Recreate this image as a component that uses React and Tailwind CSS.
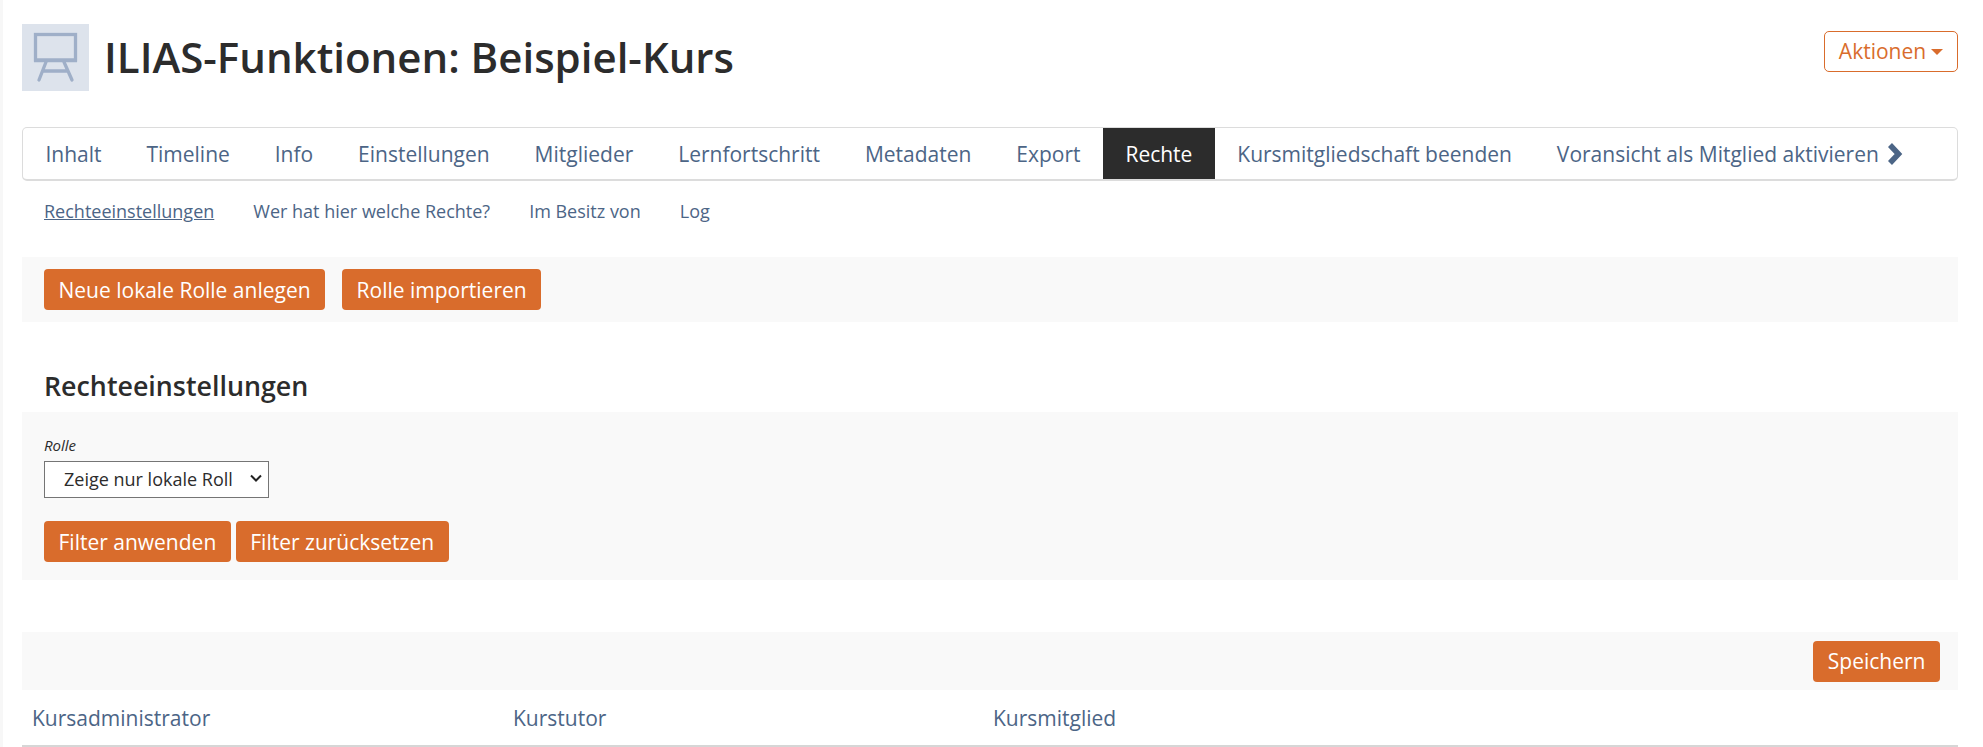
import React from "react";

const tabs = ["Inhalt","Timeline","Info","Einstellungen","Mitglieder","Lernfortschritt","Metadaten","Export","Rechte","Kursmitgliedschaft beenden","Voransicht als Mitglied aktivieren"];
const sub = ["Rechteeinstellungen","Wer hat hier welche Rechte?","Im Besitz von","Log"];

function Btn({ children }) {
  return (
    <button className="h-[41px] px-[14.5px] pt-[1px] rounded-[4px] bg-[#d96c2c] text-white text-[21px] leading-none whitespace-nowrap">
      {children}
    </button>
  );
}

export default function App() {
  return (
    <div className="w-[1983px] h-[747px] overflow-hidden bg-white border-l-[3px] border-[#f7f7f7] pl-[19px] pr-[25px] text-[#2c2c2c] font-['Open_Sans',sans-serif]">
      <header className="flex items-start justify-between pt-[24px] h-[127px]">
        <div className="flex items-start">
          <div className="w-[67px] h-[67px] bg-[#dde3ec] flex items-center justify-center">
            <svg width="67" height="67" viewBox="0 0 67 67" fill="none" stroke="#9fafc8" strokeWidth="3.3" strokeLinecap="round">
              <rect x="13.5" y="10.5" width="40" height="25.5" />
              <path d="M12 36.5h43" strokeWidth="3.6" strokeLinecap="butt" />
              <path d="M24 38 17 56M42 38l8 18M21 47h25" />
            </svg>
          </div>
          <h1 className="ml-[15px] mt-[5px] text-[42px] leading-[56px] font-semibold whitespace-nowrap">ILIAS-Funktionen: Beispiel-Kurs</h1>
        </div>
        <button className="mt-[7px] h-[41px] w-[134px] rounded-[5px] border border-[#d96c2c] text-[#d96c2c] text-[21px] leading-none flex items-center justify-center gap-[5px] bg-white">
          Aktionen
          <span className="w-0 h-0 mt-[1px] border-x-[6px] border-x-transparent border-t-[6px] border-t-[#d96c2c]" />
        </button>
      </header>

      <nav className="h-[54px] border border-[#dcdcdc] rounded-[5px] flex items-stretch border-b-2">
        {tabs.map((t) => (
          <a key={t} className={"px-[22.46px] pt-[3px] flex items-center text-[21px] whitespace-nowrap " + (t === "Rechte" ? "bg-[#2c2c2c] text-white" : "text-[#4c6586]")}>
            {t}
          </a>
        ))}
        <svg className="self-center -ml-[15px] mt-[1px]" width="19" height="24" viewBox="0 0 19 24" fill="none" stroke="#4c6586" strokeWidth="5.5">
          <path d="M4 3 12.5 12 4 21" />
        </svg>
      </nav>

      <div className="flex items-center h-[60px] pl-[22px] gap-[39px] text-[18px] text-[#4c6586]">
        {sub.map((s, i) => (
          <a key={s} className={"whitespace-nowrap " + (i === 0 ? "underline" : "")}>{s}</a>
        ))}
      </div>

      <div className="mt-[16px] h-[65px] bg-[#f9f9f9] pl-[22px] flex items-center gap-[17px]">
        <Btn>Neue lokale Rolle anlegen</Btn>
        <Btn>Rolle importieren</Btn>
      </div>

      <h2 className="pl-[22px] h-[90px] flex items-end pb-[8px] text-[26.8px] leading-[36px] font-semibold">Rechteeinstellungen</h2>

      <div className="h-[168px] bg-[#f9f9f9] pl-[22px] pt-[23px]">
        <div className="text-[15px] italic leading-[20px]">Rolle</div>
        <div className="relative mt-[6px] w-[225px] h-[37px]">
          <select className="appearance-none block w-full h-full border border-[#757575] bg-white pl-[19px] pr-[36px] text-[18px] text-[#2c2c2c]">
            <option>Zeige nur lokale Rollen</option>
          </select>
          <svg className="absolute left-[206px] top-[13px]" width="12" height="9" viewBox="0 0 12 9" fill="none" stroke="#222" strokeWidth="2">
            <path d="M1 1.5 6 6.5 11 1.5" />
          </svg>
        </div>
        <div className="mt-[23px] flex gap-[5px]">
          <Btn>Filter anwenden</Btn>
          <Btn>Filter zurücksetzen</Btn>
        </div>
      </div>

      <div className="mt-[52px] h-[58px] bg-[#f9f9f9] flex items-center justify-end pr-[18px]">
        <Btn>Speichern</Btn>
      </div>

      <div className="h-[57px] pt-[2px] border-b-2 border-[#d6d6d6] grid grid-cols-[481px_480px_1fr] items-center pl-[10px] text-[21px] text-[#4c6586]">
        <div>Kursadministrator</div>
        <div>Kurstutor</div>
        <div>Kursmitglied</div>
      </div>
    </div>
  );
}
